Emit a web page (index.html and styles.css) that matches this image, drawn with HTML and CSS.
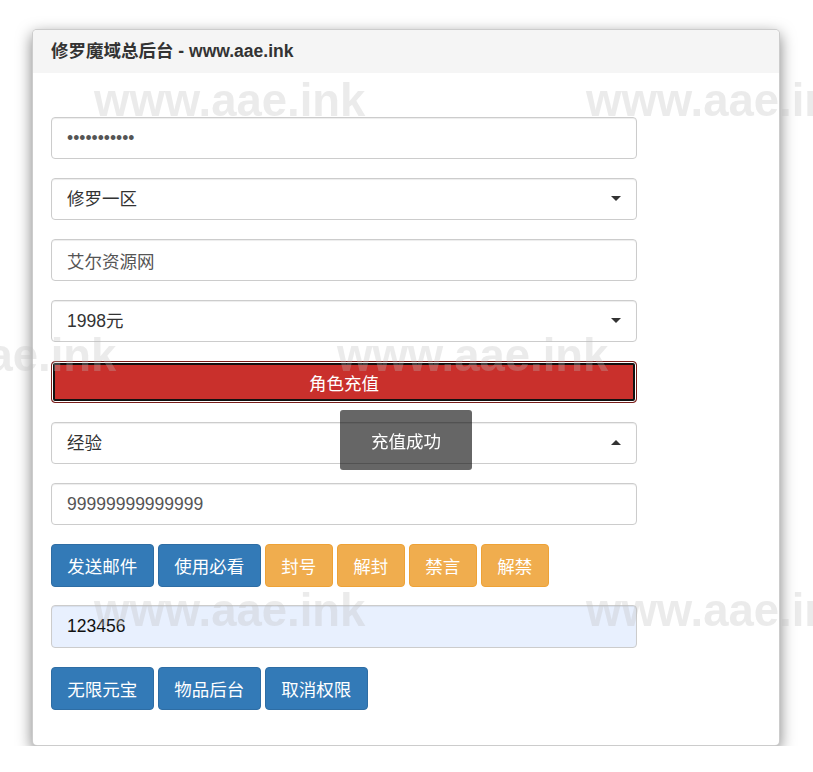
FILE: index.html
```html
<!DOCTYPE html>
<html lang="zh-CN">

<head>
    <meta charset="UTF-8">
    <meta name="viewport" content="width=device-width, initial-scale=1.0">
    <title>修罗魔域总后台</title>
    <link rel="stylesheet" href="styles.css">
</head>

<body>
    <div class="panel">
        <div class="panel-heading">修罗魔域总后台 - www.aae.ink</div>
        <div class="panel-body">
            <form class="form" action="">
                <input class="form-control" type="password" value="12345678901">
                <div class="select-wrap">
                    <select class="form-control">
                        <option>修罗一区</option>
                    </select>
                    <span class="caret"></span>
                </div>
                <input class="form-control" type="text" value="艾尔资源网">
                <div class="select-wrap">
                    <select class="form-control">
                        <option>1998元</option>
                    </select>
                    <span class="caret"></span>
                </div>
                <button type="button" class="btn btn-danger btn-block">角色充值</button>
                <div class="select-wrap">
                    <select class="form-control">
                        <option>经验</option>
                    </select>
                    <span class="caret up"></span>
                </div>
                <input class="form-control" type="text" value="99999999999999">
                <div class="btn-row">
                    <button type="button" class="btn btn-primary">发送邮件</button>
                    <button type="button" class="btn btn-primary">使用必看</button>
                    <button type="button" class="btn btn-warning">封号</button>
                    <button type="button" class="btn btn-warning">解封</button>
                    <button type="button" class="btn btn-warning">禁言</button>
                    <button type="button" class="btn btn-warning">解禁</button>
                </div>
                <input class="form-control autofill" type="text" value="123456">
                <div class="btn-row">
                    <button type="button" class="btn btn-primary">无限元宝</button>
                    <button type="button" class="btn btn-primary">物品后台</button>
                    <button type="button" class="btn btn-primary">取消权限</button>
                </div>
            </form>
        </div>
    </div>

    <div class="toast">充值成功</div>

    <!-- watermark -->
    <div class="watermark">
        <div class="wm-row"><span>www.aae.ink</span><span>www.aae.ink</span></div>
        <div class="wm-row shift"><span>www.aae.ink</span><span>www.aae.ink</span><span>www.aae.ink</span></div>
        <div class="wm-row"><span>www.aae.ink</span><span>www.aae.ink</span></div>
    </div>
</body>

</html>
```

FILE: styles.css
```css
* {
    padding: 0;
    margin: 0;
    box-sizing: border-box;
}

body {
    background-color: #fff;
    font-family: "Liberation Sans", "Noto Sans CJK SC", sans-serif;
    color: #333;
    padding-top: 29px;
}

.panel {
    width: 748px;
    margin: 0 0 0 32px;
    background-color: #fff;
    border: 1px solid rgba(0, 0, 0, .2);
    border-radius: 5px;
    box-shadow: 0 5px 15px rgba(0, 0, 0, .5);
    overflow: hidden;
}

.panel-heading {
    background-color: #f5f5f5;
    height: 43px;
    line-height: 43px;
    padding: 0 18px;
    font-size: 17.5px;
    font-weight: bold;
    color: #333;
}

.panel-body {
    padding: 44px 18px 36px;
}

.form {
    width: 586px;
    display: flex;
    flex-direction: column;
    gap: 19px;
}

.form-control {
    display: block;
    width: 100%;
    height: 42px;
    padding: 0 15px;
    font-family: inherit;
    font-size: 17.5px;
    color: #555;
    background-color: #fff;
    border: 1px solid #ccc;
    border-radius: 4px;
    box-shadow: inset 0 1px 1px rgba(0, 0, 0, .075);
    outline: none;
}

select.form-control {
    appearance: none;
    -webkit-appearance: none;
    color: #333;
}

.autofill {
    background-color: #e8f0fe;
    color: #111;
    height: 43px;
}

.select-wrap {
    position: relative;
}

.caret {
    position: absolute;
    right: 16px;
    top: 18px;
    width: 0;
    height: 0;
    border-left: 5px solid transparent;
    border-right: 5px solid transparent;
    border-top: 5px solid #333;
}

.caret.up {
    border-top: 0;
    border-bottom: 5px solid #333;
}

.btn {
    height: 43px;
    padding: 0 15.25px;
    font-family: inherit;
    font-size: 17.5px;
    color: #fff;
    border: 1px solid transparent;
    border-radius: 4px;
    cursor: pointer;
}

.btn-block {
    width: 100%;
    height: 42px;
}

.btn-danger {
    background-color: #c9302c;
    border-color: #761c19;
    box-shadow: inset 0 0 0 1px #fff, inset 0 0 0 3px #111;
}

.btn-primary {
    background-color: #337ab7;
    border-color: #2e6da4;
}

.btn-warning {
    background-color: #f0ad4e;
    border-color: #eea236;
}

.btn-row {
    display: flex;
    gap: 4.5px;
    margin-bottom: -1px;
}

.toast {
    position: fixed;
    left: 340px;
    top: 410px;
    width: 132px;
    height: 60px;
    padding-top: 18px;
    text-align: center;
    font-size: 17.5px;
    color: #fff;
    background-color: rgba(0, 0, 0, .6);
    border-radius: 3px;
}

.watermark {
    position: fixed;
    top: 0;
    left: 0;
    width: 100%;
    height: 100%;
    pointer-events: none;
    overflow: hidden;
    padding-top: 75px;
}

.wm-row {
    display: flex;
    gap: 222px;
    margin-left: 94px;
    height: 255px;
    white-space: nowrap;
}

.wm-row.shift {
    margin-left: -155px;
}

.wm-row span {
    display: block;
    width: 270px;
    font-size: 45.5px;
    font-weight: bold;
    line-height: 52px;
    color: rgba(190, 190, 190, .3);
}
```
